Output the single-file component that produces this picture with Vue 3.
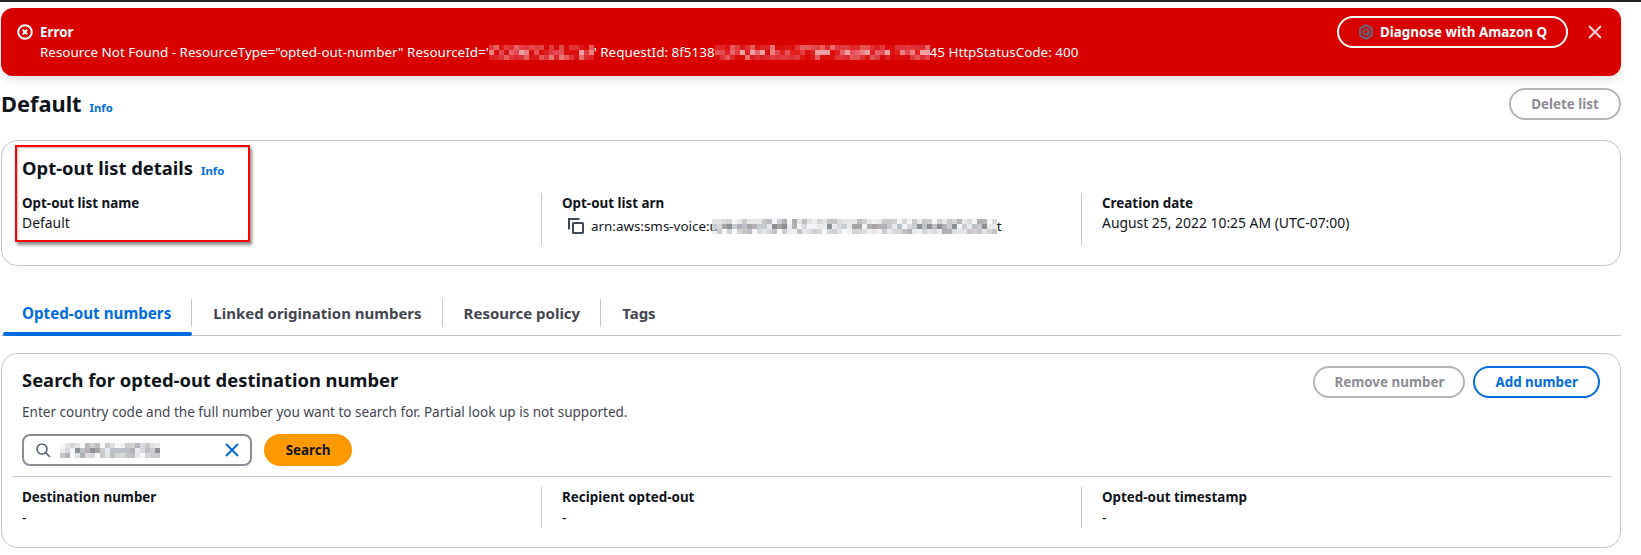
<script setup>
function cells(cols, seed, palette) {
  const out = []
  for (let r = 0; r < 3; r++) {
    for (let c = 0; c < cols; c++) {
      const x = Math.sin((c + 1) * 12.9898 + (r + 1) * 78.233 + seed) * 43758.5453
      const f = x - Math.floor(x)
      out.push({
        background: palette[Math.floor(f * palette.length)],
        opacity: r === 1 ? 1 : 0.45 + ((f * 7) % 1) * 0.3
      })
    }
  }
  return out
}
const redPal = ['#e8606a', '#e23c42', '#f0a0a0', '#de2020', '#e65058', '#ec8080', '#da1010', '#e44850']
const grayPal = ['#d8d8dc', '#b4b0b4', '#c8ccd0', '#8f8f96', '#e8eaec', '#a8a4a4', '#f2f4f6', '#bcc0c8']
const idCells = cells(21, 17, redPal)
const reqCells = cells(43, 91, redPal)
const arnCells = cells(57, 37, grayPal)
const numCells = cells(20, 53, grayPal)

const details = [
  { label: 'Destination number', value: '-' },
  { label: 'Recipient opted-out', value: '-' },
  { label: 'Opted-out timestamp', value: '-' }
]
const tabs = ['Opted-out numbers', 'Linked origination numbers', 'Resource policy', 'Tags']
</script>

<template>
  <div class="page">
    <div class="topbar"></div>
    <div class="flash">
      <svg class="flash-icon" viewBox="0 0 16 16" width="16" height="16">
        <circle cx="8" cy="8" r="6.8" fill="none" stroke="#fff" stroke-width="2" />
        <path d="M5.8 5.8l4.4 4.4M10.2 5.8l-4.4 4.4" stroke="#fff" stroke-width="2" fill="none" />
      </svg>
      <div class="flash-body">
        <div class="flash-title">Error</div>
        <div class="flash-msg">Resource Not Found - ResourceType="opted-out-number" ResourceId='<span class="mosaic" style="--cols:21"><i v-for="(c, i) in idCells" :key="i" :style="c"></i></span>' RequestId: 8f5138<span class="mosaic" style="--cols:43"><i v-for="(c, i) in reqCells" :key="i" :style="c"></i></span>45 HttpStatusCode: 400</div>
      </div>
      <button class="btn btn-q">
        <svg viewBox="0 0 16 16" width="16" height="16">
          <path d="M8 1.2l5.9 3.4v6.8L8 14.8l-5.9-3.4V4.6z" fill="none" stroke="#5f6b7a" stroke-width="2" stroke-linejoin="round" />
          <circle cx="8" cy="8" r="2.7" fill="none" stroke="#5f6b7a" stroke-width="1.6" />
          <path d="M8.4 8.2l3.4 2.3" stroke="#5f6b7a" stroke-width="1.8" />
        </svg>
        Diagnose with Amazon Q
      </button>
      <svg class="flash-close" viewBox="0 0 16 16" width="16" height="16">
        <path d="M2 2l12 12M14 2L2 14" stroke="#f2dcdc" stroke-width="1.8" fill="none" />
      </svg>
    </div>

    <header class="page-head">
      <h1>Default</h1>
      <a class="info">Info</a>
      <button class="btn btn-disabled delete">Delete list</button>
    </header>

    <section class="card card-details">
      <div class="heading-row">
        <h2>Opt-out list details</h2>
        <a class="info">Info</a>
      </div>
      <div class="cols">
        <div class="col">
          <div class="label">Opt-out list name</div>
          <div class="value">Default</div>
        </div>
        <div class="col">
          <div class="label">Opt-out list arn</div>
          <div class="value arn">
            <svg viewBox="0 0 16 16" width="16" height="16">
              <path d="M1 11.5V1h10.5" fill="none" stroke="#414750" stroke-width="2" />
              <rect x="5" y="5" width="10" height="10" rx="0.6" fill="none" stroke="#414750" stroke-width="2" />
            </svg>
            <span class="arn-text">arn:aws:sms-voice:u<span class="mosaic" style="--cols:57"><i v-for="(c, i) in arnCells" :key="i" :style="c"></i></span>t</span>
          </div>
        </div>
        <div class="col">
          <div class="label">Creation date</div>
          <div class="value">August 25, 2022 10:25 AM (UTC-07:00)</div>
        </div>
      </div>
      <div class="callout"></div>
    </section>

    <nav class="tabs">
      <div v-for="(t, i) in tabs" :key="t" class="tab" :class="{ active: i === 0 }">
        <span>{{ t }}</span>
      </div>
    </nav>

    <section class="card card-search">
      <div class="search-head">
        <div>
          <h2>Search for opted-out destination number</h2>
          <p class="desc">Enter country code and the full number you want to search for. Partial look up is not supported.</p>
        </div>
        <div class="actions">
          <button class="btn btn-disabled btn-remove">Remove number</button>
          <button class="btn btn-blue">Add number</button>
        </div>
      </div>
      <div class="search-row">
        <div class="input">
          <svg viewBox="0 0 16 16" width="16" height="16">
            <circle cx="7" cy="7" r="5" fill="none" stroke="#5f6b7a" stroke-width="1.7" />
            <path d="M10.6 10.6L15 15" stroke="#5f6b7a" stroke-width="1.7" />
          </svg>
          <span class="mosaic" style="--cols:20"><i v-for="(c, i) in numCells" :key="i" :style="c"></i></span>
          <svg class="clear" viewBox="0 0 16 16" width="16" height="16">
            <path d="M2 2l12 12M14 2L2 14" stroke="#006ce0" stroke-width="2" fill="none" />
          </svg>
        </div>
        <button class="btn btn-primary">Search</button>
      </div>
      <div class="cols cols-results">
        <div v-for="d in details" :key="d.label" class="col">
          <div class="label">{{ d.label }}</div>
          <div class="value">{{ d.value }}</div>
        </div>
      </div>
    </section>
  </div>
</template>

<style>
html, body { margin: 0; background: #fff; }
</style>

<style scoped>
.page {
  width: 1641px;
  height: 555px;
  overflow: hidden;
  box-sizing: border-box;
  padding: 0 20px 0 1px;
  font-family: "Noto Sans", "Open Sans", sans-serif;
  font-size: 13.9px;
  line-height: 20px;
  color: #16191f;
  background: #fff;
}
.topbar { height: 2px; margin: 0 -20px 6px -1px; background: #232323; }

.flash {
  height: 68px;
  box-sizing: border-box;
  background: #d90000;
  border-radius: 12px;
  color: #fff;
  display: flex;
  align-items: flex-start;
  padding: 8px 16px;
  box-shadow: 0 4px 8px rgba(0, 7, 22, 0.12);
}
.flash-icon { margin: 8px 7px 0 0; flex: none; }
.flash-body { flex: 1; padding-top: 6px; }
.flash-title { font-weight: 700; font-size: 13.4px; }
.flash-msg { white-space: nowrap; font-size: 13.45px; }
.flash-close { margin: 8px 2px 0 19px; flex: none; }

.mosaic {
  display: inline-grid;
  grid-template-columns: repeat(var(--cols), 5px);
  grid-auto-rows: 5px;
  vertical-align: top;
  margin-top: 3px;
}
.mosaic i { display: block; }
.input .mosaic { margin: 0 0 0 2px; }

.btn {
  font-family: inherit;
  font-size: 13.4px;
  font-weight: 700;
  line-height: 20px;
  height: 32px;
  box-sizing: border-box;
  padding: 4px 20px;
  border-radius: 20px;
  background: transparent;
  border: 2px solid;
  display: inline-flex;
  align-items: center;
  justify-content: center;
  gap: 8px;
  white-space: nowrap;
}
.btn svg { flex: none; }
.btn-q { border-color: #fff; color: #fff; width: 231px; gap: 6px; }
.btn-disabled { border-color: #b4b4bb; color: #8c8c94; }
.btn-remove { padding: 4px 19px; }
.btn-blue { border-color: #006ce0; color: #006ce0; }
.btn-primary { background: #ff9900; border-color: #ff9900; color: #0f141a; padding: 4px 20px; width: 88px; }

.page-head { display: flex; align-items: center; height: 32px; margin-top: 12px; }
.page-head h1 { margin: -1px 0 0; font-size: 21.8px; line-height: 32px; font-weight: 700; color: #0f141a; }
.page-head .info { margin: 7px 0 0 8px; }
.delete { margin-left: auto; width: 112px; }

.info { font-size: 11.3px; font-weight: 700; color: #006ce0; line-height: 16px; }

.card {
  background: #fff;
  border: 1px solid #c6c6cd;
  border-radius: 16px;
  box-sizing: border-box;
}
.card h2 { margin: 0; font-size: 18.4px; line-height: 24px; font-weight: 700; color: #0f141a; }
.card-details {
  position: relative;
  height: 126px;
  margin-top: 20px;
  padding: 15px 20px 0;
}
.heading-row { display: flex; align-items: center; gap: 8px; }
.heading-row .info { margin-top: 6px; }
.callout {
  position: absolute;
  left: 13px;
  top: 4px;
  width: 235px;
  height: 97px;
  box-sizing: border-box;
  border: 2px solid #f00;
  box-shadow: 2px 3px 3px rgba(0, 0, 0, 0.45), inset 1px 1px 2px rgba(0, 0, 0, 0.25);
}
.cols { display: grid; grid-template-columns: 519px 540px 1fr; margin-top: 13px; }
.col { height: 52px; box-sizing: border-box; }
.col + .col { border-left: 1px solid #c6c6cd; padding-left: 20px; }
.label { font-weight: 700; font-size: 13.4px; color: #0f141a; }
.value { color: #0f141a; }
.arn { display: flex; align-items: center; gap: 7px; padding-left: 6px; margin-top: 3px; font-size: 13.4px; }
.arn svg { flex: none; }
.arn-text { white-space: nowrap; }
.arn-text .mosaic { margin-left: -6px; }

.tabs {
  display: flex;
  height: 50px;
  margin-top: 20px;
  border-bottom: 1px solid #c6c6cd;
  box-sizing: border-box;
}
.tab {
  position: relative;
  font-size: 15px;
  font-weight: 700;
  color: #424650;
  display: flex;
  align-items: flex-start;
  padding: 0 0 0 1px;
}
.tab span {
  display: block;
  height: 28px;
  line-height: 28px;
  padding: 0 20px 0 20px;
  margin-top: 13px;
  border-right: 1px solid #c6c6cd;
}
.tab:last-child span { border-right: 0; }
.tab.active { color: #006ce0; font-size: 15.2px; }
.tab.active::after {
  content: "";
  position: absolute;
  left: 2px;
  right: 0;
  bottom: -1px;
  height: 4px;
  border-radius: 2px;
  background: #006ce0;
}

.card-search {
  height: 195px;
  margin-top: 17px;
  padding: 14px 20px 0;
}
.search-head { display: flex; justify-content: space-between; }
.desc { margin: 10px 0 0; color: #424650; font-size: 13.55px; }
.actions { display: flex; gap: 8px; margin-top: -2px; }
.search-row { display: flex; align-items: center; gap: 12px; margin-top: 12px; }
.input {
  width: 230px;
  height: 32px;
  box-sizing: border-box;
  border: 2px solid #8c8c94;
  border-radius: 8px;
  display: flex;
  align-items: center;
  padding: 0 10px 0 11px;
  gap: 7px;
}
.clear { margin-left: auto; }
.cols-results {
  margin: 10px -12px 0 -10px;
  padding: 10px 12px 0 10px;
  border-top: 1px solid #c6c6cd;
}
.cols-results .col { height: 41px; }
.cols-results .value { margin-top: 1px; }
</style>
